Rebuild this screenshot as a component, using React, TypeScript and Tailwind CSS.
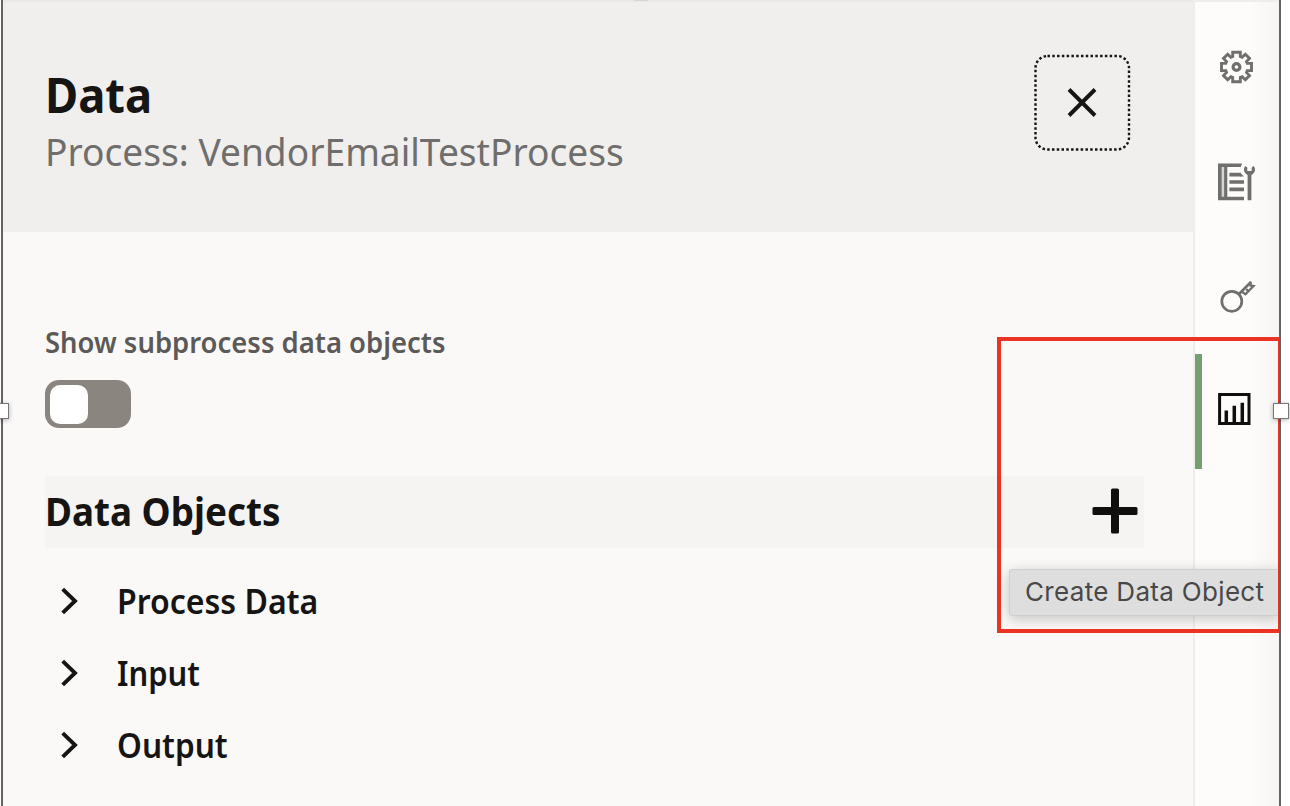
import type { ReactNode } from "react";

function GearIcon() {
  return (
    <svg className="block" width="34" height="34" viewBox="0 0 34 34" fill="none" stroke="#6f6f6d" strokeWidth="2.9">
      <path d="M12.700 2.200h7.600v4.300l1.800.7 3.200-3 4.200 4.200-3 3.200.7 1.800h4.300v7.200h-4.300l-.7 1.800 3 3.200-4.200 4.200-3.200-3-1.800.7v4.300h-7.600v-4.300l-1.800-.7-3.200 3-4.200-4.200 3-3.200-.7-1.800H1.500v-7.200h4.300l.7-1.800-3-3.200 4.200-4.200 3.200 3 1.800-.7z" />
      <circle cx="16.500" cy="17" r="3.400" strokeWidth="3.200" />
    </svg>
  );
}

function NotebookWrenchIcon() {
  return (
    <svg className="block" width="38" height="38" viewBox="0 0 38 38" fill="none" stroke="#6f6f6d">
      <path d="M2 2h4v34H2z" fill="#d4d4d2" stroke="none" />
      <path d="M0 .5h24l-1.200 3.600H3.600v29.600H26v3.600H0z" fill="#6f6f6d" stroke="none" />
      <path d="M7.700 3v32" strokeWidth="3.200" />
      <path d="M11.400 11.600h11.600M11.400 19H26M11.400 26.400H26" strokeWidth="3.600" />
      <path d="M22 9.800l4 3.600h-4z" fill="#6f6f6d" stroke="none" />
      <path d="M27.300 3l2 1.500v3.600h4.400V4.500l2-1.500c1 1.200 1.300 2.400 1.300 3.800 0 2.300-1.500 4.200-3.600 5.200v25.300h-3.800V12c-2.100-1-3.600-2.900-3.600-5.200 0-1.400.3-2.600 1.300-3.800z" fill="#6f6f6d" stroke="none" />
    </svg>
  );
}

function KeyIcon() {
  return (
    <svg className="block" width="36" height="36" viewBox="0 0 36 36" fill="none" stroke="#6f6f6d" strokeWidth="2.7">
      <circle cx="11.800" cy="22.300" r="10" />
      <path d="M18.500 15.500L31 3" />
      <path d="M30.500 2.800v3.700L33.500 7 25.500 15.300 21.500 12.500" strokeWidth="2.300" />
      <path d="M26.300 11.800l1.700-1.700" strokeWidth="2.600" />
    </svg>
  );
}

function ChartIcon() {
  return (
    <svg className="block" width="33" height="32" viewBox="0 0 33 32" fill="none" stroke="#100f0e">
      <path d="M1.600 1.500h29.400v29H1.600z" strokeWidth="3" />
      <path d="M8.300 30V17.500M16.300 30V12.800M24.300 30V9.800" strokeWidth="3.500" />
    </svg>
  );
}

function TreeRow({ children, stretch }: { children: ReactNode; stretch: string }) {
  return (
    <li className="flex h-[72px] items-center">
      <svg className="ml-4 mr-[38px] shrink-0" width="18" height="28" viewBox="0 0 18 28" fill="none" stroke="#161513" strokeWidth="3.900">
        <path d="M1.700 2.200L14 14 1.700 25.800" />
      </svg>
      <span className={`origin-left text-[34px] leading-[46px] font-semibold whitespace-nowrap ${stretch}`}>{children}</span>
    </li>
  );
}

function Handle({ className }: { className: string }) {
  return <span className={`absolute h-4 w-4 border border-[#77777a] bg-white shadow-[0_1px_5px_rgba(0,0,0,0.3)] ${className}`} />;
}

export default function App() {
  return (
    <div className="relative flex h-[806px] w-[1290px] overflow-hidden bg-white pl-px font-['Noto_Sans',sans-serif] text-[#161513]">
      <div className="flex w-[1280px] border-x-2 border-[#626365] bg-[#fbf9f8]">
        <main className="flex w-[1190px] flex-col">
          <header className="flex h-[232px] items-start justify-between border-t-2 border-[#eae9e8] bg-[#f0efed] pl-[42px] pr-[62px]">
            <div className="pt-[59px]">
              <h1 className="origin-left scale-x-[0.925] text-[49px] leading-[66px] font-bold">Data</h1>
              <p className="-mt-px origin-left scale-x-[0.952] text-[39px] leading-[50px] whitespace-nowrap text-[#6f6e6c]">Process: VendorEmailTestProcess</p>
            </div>
            <button aria-label="Close" className="mt-[52px] flex h-[97px] w-[97px] items-center justify-center">
              <svg width="97" height="97" viewBox="0 0 97 97" fill="none" stroke="#161513">
                <rect x="1.500" y="2" width="93.500" height="93.500" rx="12" strokeWidth="2.400" strokeDasharray="2.500 2.280" />
                <path d="M35 35.500l26 26M61 35.500l-26 26" strokeWidth="3.900" />
              </svg>
            </button>
          </header>
          <div className="pl-[42px] pr-[49px] pt-[90px]">
            <p className="origin-left scale-x-[0.946] text-[29px] leading-10 font-semibold whitespace-nowrap text-[#5c5a58]">Show subprocess data objects</p>
            <button role="switch" aria-checked="false" aria-label="Show subprocess data objects" className="mt-[18px] flex h-12 w-[86px] items-center rounded-[14px] bg-[#8b8580] pl-[5px]">
              <span className="h-[39px] w-[38px] rounded-[10px] bg-white" />
            </button>
            <div className="mt-12 flex h-[72px] items-center justify-between bg-[#f5f4f2] pr-[6px]">
              <h2 className="-mt-[3px] origin-left scale-x-[0.944] text-[39px] leading-[54px] font-bold whitespace-nowrap">Data Objects</h2>
              <svg width="46" height="46" viewBox="0 0 46 46" fill="#100f0e" className="-mt-0.5">
                <rect x="19" y=".5" width="8" height="45" rx="1.500" />
                <rect x=".5" y="19" width="45" height="8" rx="1.500" />
              </svg>
            </div>
            <ul className="mt-[17px]">
              <TreeRow stretch="scale-x-[0.942]">Process Data</TreeRow>
              <TreeRow stretch="scale-x-[0.910]">Input</TreeRow>
              <TreeRow stretch="scale-x-[0.930]">Output</TreeRow>
            </ul>
          </div>
        </main>
        <nav className="flex flex-1 flex-col border-l-2 border-[#eeedec] bg-linear-to-r from-[#fdfcfa] from-65% to-[#f6f5f4]">
          <div className="h-0.5 bg-[#eeedec]" />
          <span className="mt-12 ml-[25px]"><GearIcon /></span>
          <span className="mt-[79px] ml-[23px]"><NotebookWrenchIcon /></span>
          <span className="mt-[78px] ml-[25px]"><KeyIcon /></span>
          <div className="mt-[39px] flex h-[115px] items-center border-l-[7px] border-[#74a06f] pl-4 pb-[5px]">
            <ChartIcon />
          </div>
        </nav>
      </div>
      <div className="absolute top-0 left-[634px] h-px w-[14px] rounded-b-full bg-[#d8d7d6]" />
      <div className="absolute top-[569px] left-[1009px] flex h-[47px] w-[270px] items-center rounded-l-[3px] border border-[#cfcfcf] bg-[#dedede] pl-[15px] shadow-[0_3px_14px_rgba(0,0,0,0.22)]">
        <span className="-mt-0.5 font-['Inter',sans-serif] text-[26px] leading-8 tracking-[0.320px] whitespace-nowrap text-[#484848]">Create Data Object</span>
      </div>
      <div className="absolute top-0 left-[1281px] h-full w-[9px] bg-white" />
      <div className="absolute top-0 left-[1279px] h-full w-0.5 bg-[#626365]" />
      <div className="absolute top-[337px] left-[997px] h-[296px] w-[282px] border-4 border-r border-[#ea3323]" />
      <Handle className="top-[403px] -left-[7px]" />
      <Handle className="top-[403px] left-[1273px]" />
    </div>
  );
}
